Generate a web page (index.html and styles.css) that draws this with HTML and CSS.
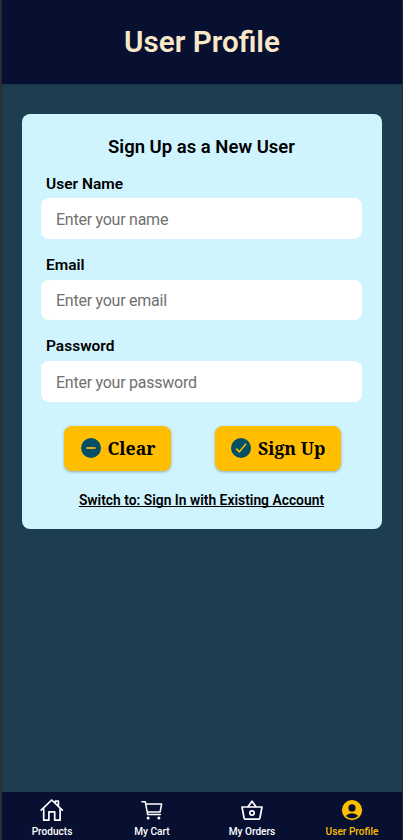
FILE: index.html
```html
<!DOCTYPE html>
<html lang="en">
<head>
<meta charset="utf-8">
<title>User Profile</title>
<link rel="stylesheet" href="styles.css">
</head>
<body>
<div class="app">
  <header class="header"><h1>User Profile</h1></header>
  <main class="main">
    <form class="card">
      <h2>Sign Up as a New User</h2>
      <label for="name"><span>User Name</span></label>
      <input id="name" type="text" placeholder="Enter your name">
      <label for="email"><span>Email</span></label>
      <input id="email" type="text" placeholder="Enter your email">
      <label for="password"><span>Password</span></label>
      <input id="password" type="password" placeholder="Enter your password">
      <div class="actions">
        <button type="button" class="btn clear">
          <svg width="20" height="20" viewBox="0 0 20 20"><circle cx="10" cy="10" r="10" fill="#034f67"/><path d="M5.4 10h9.2" stroke="#ffbf00" stroke-width="1.7"/></svg>
          <span>Clear</span>
        </button>
        <button type="button" class="btn signup">
          <svg width="20" height="20" viewBox="0 0 20 20"><circle cx="10" cy="10" r="10" fill="#034f67"/><path d="M5.2 10.6l3.2 3.2 6.6-8" fill="none" stroke="#ffbf00" stroke-width="1.5"/></svg>
          <span>Sign Up</span>
        </button>
      </div>
      <a class="switch">Switch to: Sign In with Existing Account</a>
    </form>
  </main>
  <nav class="nav">
    <a class="tab">
      <svg width="24" height="24" viewBox="0 0 24 24" fill="none" stroke="currentColor" stroke-width="1.7" stroke-linecap="round" stroke-linejoin="round"><path d="M1.2 12.2L11.7 2l10.6 10.2M3.7 10.5v11.7h5.2v-8.3h5.8v8.3h5.4V10.5M15.4 4.8V3h3v5"/></svg>
      <span>Products</span>
    </a>
    <a class="tab">
      <svg width="24" height="24" viewBox="0 0 24 24" fill="none" stroke="currentColor" stroke-width="1.5" stroke-linecap="round" stroke-linejoin="round"><path d="M1.9 3.8h3.4l2.4 12.8h12.6M5.9 6h15.7l-1.5 8H7.3"/><circle cx="8.1" cy="20.1" r="1.5" fill="currentColor" stroke="none"/><circle cx="18.9" cy="20.1" r="1.5" fill="currentColor" stroke="none"/></svg>
      <span>My Cart</span>
    </a>
    <a class="tab">
      <svg width="24" height="24" viewBox="0 0 24 24" fill="none" stroke="currentColor" stroke-width="1.7" stroke-linecap="round" stroke-linejoin="round"><path d="M2 9h20l-2.1 11q-.3 1.2-1.5 1.2H5.6q-1.2 0-1.5-1.2zM8 8.7l4-5.5 4 5.5"/><circle cx="12" cy="15" r="2.2"/></svg>
      <span>My Orders</span>
    </a>
    <a class="tab active">
      <svg width="24" height="24" viewBox="0 0 24 24"><circle cx="12" cy="12.2" r="10.1" fill="currentColor"/><circle cx="12" cy="9.9" r="3.6" fill="#081032"/><path d="M5.8 18q2.2-2.7 6.2-2.7t6.2 2.7q-2.6 2.4-6.2 2.4T5.8 18z" fill="#081032"/></svg>
      <span>User Profile</span>
    </a>
  </nav>
</div>
</body>
</html>
```
FILE: styles.css
```css
* { box-sizing: border-box; }
body { margin: 0; font-family: Roboto, sans-serif; color: #000; }
.app {
  height: 840px;
  display: flex;
  flex-direction: column;
  background: #1c3e50;
  border-left: 2px solid #2d2e32;
  border-right: 1px solid #24272c;
}
.header {
  height: 84px;
  background: #081032;
  display: flex;
  align-items: center;
  justify-content: center;
  box-shadow: 0 1px 2px rgba(0, 0, 0, .15);
}
h1 { margin: 0; font-size: 29.6px; line-height: 36px; font-weight: 600; color: #f8e8c8; }
.main { flex: 1; padding: 29.6px 20px 0; }
.card {
  height: 415px;
  border-radius: 8px;
  background: #cff4fe;
  padding: 21.2px 20px 0 19px;
  display: flex;
  flex-direction: column;
}
h2 { margin: 0; font-size: 18.5px; line-height: 24px; font-weight: 600; text-align: center; }
label { font-size: 15.5px; line-height: 20px; font-weight: 600; margin: 15.9px 0 0 5px; }
h2 + label { margin-top: 15.2px; }
label span { display: block; }
input {
  width: 321px;
  height: 40.5px;
  flex: none;
  margin: 5px 0 0;
  padding: 1px 15px 0;
  border: 0;
  border-radius: 8px;
  background: #fff;
  font: 16px Roboto, sans-serif;
  letter-spacing: -.25px;
}
#name { margin-top: 4.5px; }
input::placeholder { color: #707070; opacity: 1; }
.actions { display: flex; gap: 44px; margin: 24.3px 0 0 23px; }
.btn {
  height: 45px;
  flex: none;
  border: 0;
  border-radius: 8px;
  background: #ffbf00;
  color: #000;
  padding: 0 0 1px 16.5px;
  display: flex;
  align-items: center;
  gap: 7px;
  font: bold 17.7px "Noto Serif", "DejaVu Serif Condensed", "DejaVu Serif", serif;
  white-space: nowrap;
  box-shadow: 0 1px 3px rgba(0, 0, 0, .3);
}
.btn svg { flex: none; }
.clear { width: 106.5px; }
.signup { width: 126.5px; }
.switch {
  margin-top: 20px;
  font-size: 13.85px;
  line-height: 18px;
  font-weight: 600;
  text-align: center;
  text-decoration: underline;
  text-decoration-thickness: 1px;
  text-decoration-skip-ink: none;
}
.nav { height: 48px; background: #081032; display: flex; color: #fff; }
.tab { flex: 1; display: flex; flex-direction: column; align-items: center; padding-top: 6px; }
.tab span { font-size: 10.1px; line-height: 12px; font-weight: 500; margin-top: 3.5px; }
.tab svg { flex: none; }
.active { color: #ffbf00; }
```
